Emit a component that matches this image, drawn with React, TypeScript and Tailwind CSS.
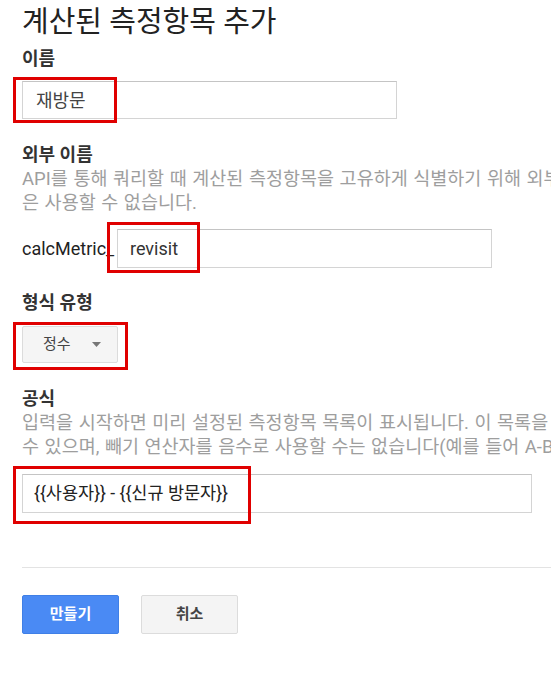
import React from "react";

const Label = ({ children, className = "" }: { children: React.ReactNode; className?: string }) => (
  <div className={"text-[18px] leading-[24px] font-bold text-[#333333] " + className}>{children}</div>
);

export default function App() {
  return (
    <div className="relative w-[551px] h-[675px] overflow-hidden bg-white font-['Roboto','Noto_Sans_CJK_KR',sans-serif]">
      <div className="pl-[22px] pt-[3px]">
        <h1 className="text-[29px] leading-[38px] font-normal text-[#222222] whitespace-nowrap">계산된 측정항목 추가</h1>

        <Label className="mt-[6px]">이름</Label>
        <div className="mt-[10px] w-[375px] h-[38px] border border-[#d4d4d4] border-t-[#c4c4c4] flex items-center pl-[13px] text-[18px] text-[#444444]">
          재방문
        </div>

        <Label className="mt-[24px]">외부 이름</Label>
        <div className="text-[18.5px] leading-[24px] [word-spacing:1px] text-[#9e9e9e] whitespace-nowrap">
          <div>API를 통해 쿼리할 때 계산된 측정항목을 고유하게 식별하기 위해 외부 이름이 사용됩니다. 공백</div>
          <div>은 사용할 수 없습니다.</div>
        </div>

        <div className="mt-[14px] flex items-center">
          <span className="text-[18px] text-[#222222] w-[95px] whitespace-nowrap">calcMetric_</span>
          <div className="w-[375px] h-[39px] border border-[#d4d4d4] border-t-[#c4c4c4] flex items-center pl-[12px] text-[18px] text-[#333333]">
            revisit
          </div>
        </div>

        <Label className="mt-[23px]">형식 유형</Label>
        <div className="mt-[11px] w-[96px] h-[37px] rounded-[2px] border border-[#dcdcdc] bg-[#f5f5f5] flex items-center pl-[20px] text-[15px] text-[#444444]">
          <span>정수</span>
          <svg className="ml-[21px]" width="9" height="5" viewBox="0 0 9 5">
            <path d="M0 0 L9 0 L4.5 5 Z" fill="#777777" />
          </svg>
        </div>

        <Label className="mt-[24px]">공식</Label>
        <div className="text-[18.5px] leading-[24px] [word-spacing:1px] text-[#9e9e9e] whitespace-nowrap">
          <div>입력을 시작하면 미리 설정된 측정항목 목록이 표시됩니다. 이 목록을 사용할</div>
          <div>수 있으며, 빼기 연산자를 음수로 사용할 수는 없습니다(예를 들어 A-B는 가능).</div>
        </div>
        <div className="mt-[15px] w-[510px] h-[39px] border border-[#d4d4d4] border-t-[#c4c4c4] flex items-center pl-[11px] text-[17.5px] text-[#222222] whitespace-nowrap">
          {"{{사용자}} - {{신규 방문자}}"}
        </div>

        <div className="mt-[54px] h-px bg-[#e3e3e3]" />

        <div className="mt-[27px] flex gap-[22px]">
          <button className="w-[97px] h-[39px] rounded-[2px] bg-[#4a8af4] border border-[#3f7fe6] text-white text-[15px] font-bold">
            만들기
          </button>
          <button className="w-[97px] h-[39px] rounded-[2px] bg-[#f4f4f4] border border-[#dcdcdc] text-[#444444] text-[15px] font-bold">
            취소
          </button>
        </div>
      </div>

      <div className="absolute left-[13px] top-[77px] w-[104px] h-[46px] border-[3px] border-[#e00000]" />
      <div className="absolute left-[107px] top-[222px] w-[93px] h-[51px] border-[3px] border-[#e00000]" />
      <div className="absolute left-[13px] top-[322px] w-[115px] h-[48px] border-[3px] border-[#e00000]" />
      <div className="absolute left-[13px] top-[466px] w-[238px] h-[58px] border-[3px] border-[#e00000]" />
    </div>
  );
}
